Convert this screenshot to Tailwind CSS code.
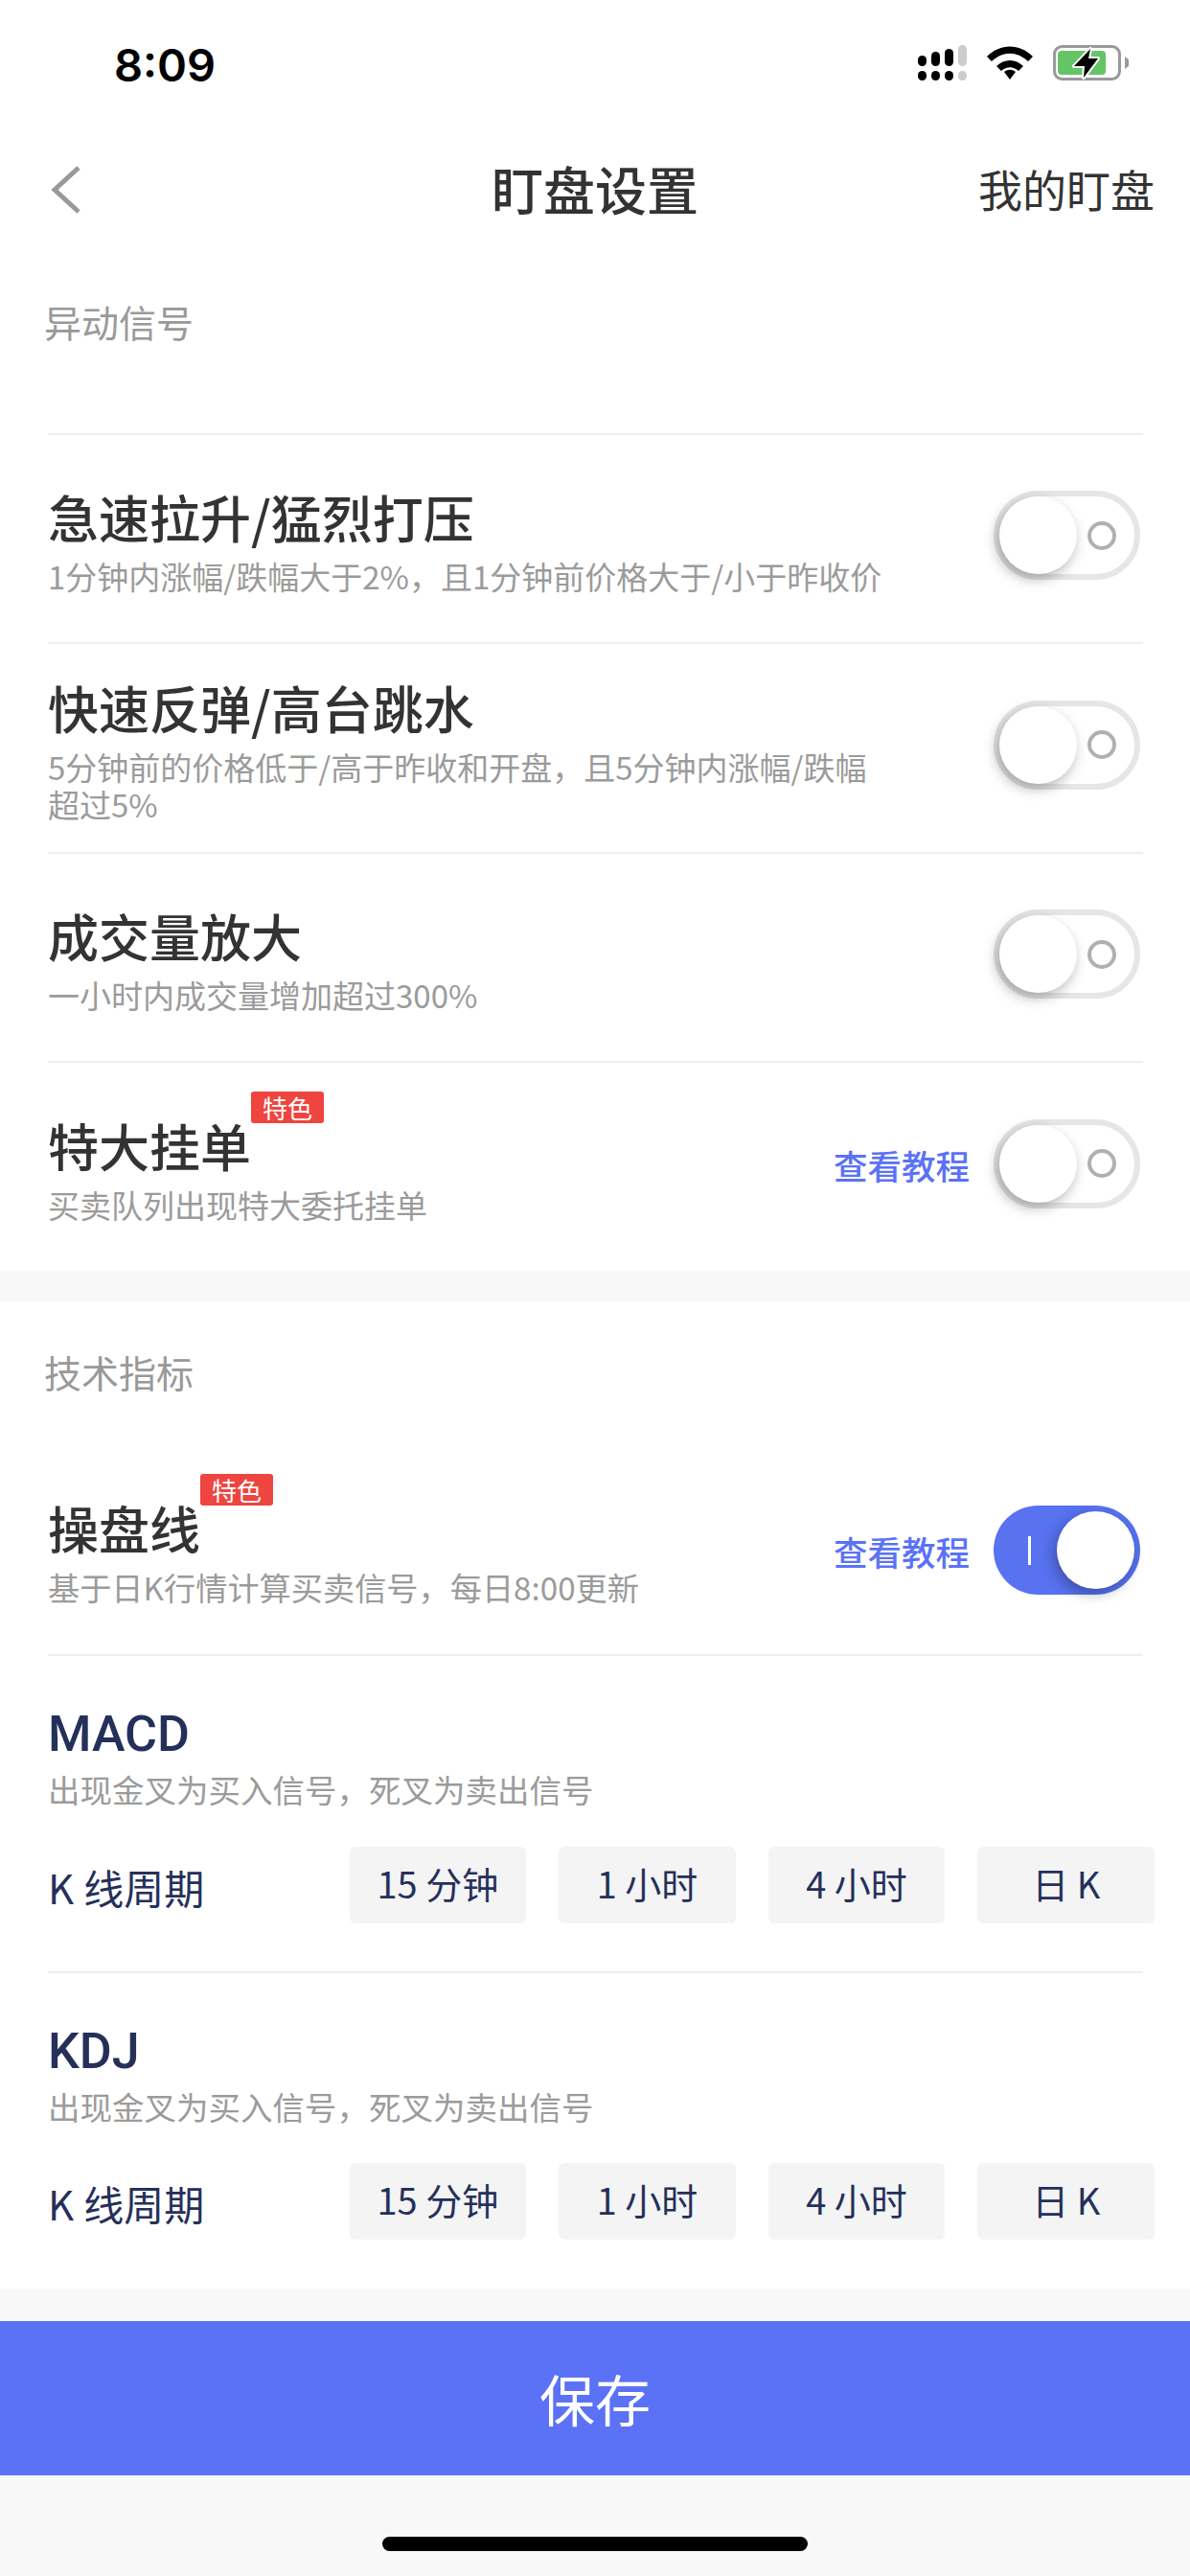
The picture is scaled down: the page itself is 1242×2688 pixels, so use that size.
<!DOCTYPE html>
<html lang="zh-CN">

<head>
  <meta charset="UTF-8" />
  <meta name="viewport" content="width=device-width, initial-scale=1.0" />
  <title>盯盘设置</title>
  <script src="https://cdn.jsdelivr.net/npm/@tailwindcss/browser@4"></script>
</head>

<body class="bg-[#f8f8f8] font-['Noto_Sans_CJK_SC',sans-serif] text-[#333333]">
  <div class="w-[1242px] h-[2688px] flex flex-col overflow-hidden">

    <!-- Status bar -->
    <div class="bg-white h-[132px] shrink-0 flex items-start justify-between pt-[42px] pl-[119px] pr-[64px]">
      <span class="font-['Inter',sans-serif] font-semibold text-[47px] leading-[52px] text-black">8:09</span>
      <div class="flex items-center gap-[21px] pt-[5px]">
        <svg width="51" height="37" viewBox="0 0 51 37">
          <rect x="0" y="11" width="9" height="11" rx="4.5" fill="#000" />
          <rect x="14" y="7" width="9" height="15" rx="4.5" fill="#000" />
          <rect x="28" y="4" width="9" height="18" rx="4.5" fill="#000" />
          <rect x="42" y="0" width="9" height="22" rx="4.5" fill="#ccc" />
          <rect x="0" y="27" width="9" height="10" rx="4.5" fill="#000" />
          <rect x="14" y="27" width="9" height="10" rx="4.5" fill="#000" />
          <rect x="28" y="27" width="9" height="10" rx="4.5" fill="#000" />
          <rect x="42" y="27" width="9" height="10" rx="4.5" fill="#ccc" />
        </svg>
        <svg width="48" height="35" viewBox="0 0 48 35">
          <path d="M0 11 C14 -3 34 -3 48 11 L43 16 C31 5 17 5 5 16 Z" fill="#000" />
          <path d="M10 21 C18 13 30 13 38 21 L33 26 C27 21 21 21 15 26 Z" fill="#000" />
          <path d="M18 27 C22 24 26 24 30 27 L24 35 Z" fill="#000" />
        </svg>
        <svg width="79" height="37" viewBox="0 0 79 37">
          <rect x="1.5" y="1.5" width="68" height="34" rx="8" fill="none" stroke="#999" stroke-width="3" />
          <rect x="5" y="6" width="50" height="25" rx="4" fill="#65c466" />
          <path d="M39 4 L22 22 H33 L32 34 L47 14 H37 Z" fill="#000" stroke="#fff" stroke-width="4" paint-order="stroke" stroke-linejoin="round" />
          <path d="M75 12 L79 15 V22 L75 25 Z" fill="#999" />
        </svg>
      </div>
    </div>

    <!-- Nav bar -->
    <div class="bg-white h-[132px] shrink-0 grid grid-cols-[1fr_auto_1fr] items-center px-[37px]">
      <svg class="ml-[15px]" width="34" height="52" viewBox="0 0 34 52" fill="none">
        <path d="M30 3 L5 26 L30 49" stroke="#999999" stroke-width="5" />
      </svg>
      <h1 class="text-[54px] leading-[66px] font-medium -mt-[3px]">盯盘设置</h1>
      <span class="justify-self-end text-[46px] leading-[60px] -mt-[5px]">我的盯盘</span>
    </div>

    <!-- 异动信号 -->
    <section class="bg-white h-[1062px] shrink-0">
      <h2 class="h-[188px] pl-[46px] pt-[47px] text-[39px] leading-[48px] text-[#999999]">异动信号</h2>

      <div class="ml-[50px] mr-[49px] h-[218px] border-t-2 border-[#eeeeee] flex items-center justify-between pt-[6px]">
        <div class="w-[900px]">
          <div class="text-[53px] leading-[60px] font-medium">急速拉升/猛烈打压</div>
          <div class="mt-[13px] text-[33px] leading-[39px] text-[#9b9b9b]">1分钟内涨幅/跌幅大于2%，且1分钟前价格大于/小于昨收价</div>
        </div>
        <div class="mr-[3px] -mt-[13px] w-[153px] h-[93px] rounded-full border-[6px] border-[#e6e6e6] flex items-center">
          <div class="w-[81px] h-[81px] rounded-full bg-white shadow-[-3px_5px_14px_rgba(0,0,0,0.3)]"></div>
          <div class="ml-[11px] w-[30px] h-[30px] rounded-full border-[4px] border-[#b0b0b0]"></div>
        </div>
      </div>

      <div class="ml-[50px] mr-[49px] h-[219px] border-t-2 border-[#eeeeee] flex items-center justify-between pt-[6px]">
        <div class="w-[900px]">
          <div class="text-[53px] leading-[60px] font-medium">快速反弹/高台跳水</div>
          <div class="mt-[13px] text-[33px] leading-[39px] text-[#9b9b9b] w-[880px]">5分钟前的价格低于/高于昨收和开盘，且5分钟内涨幅/跌幅超过5%</div>
        </div>
        <div class="mr-[3px] -mt-[13px] w-[153px] h-[93px] rounded-full border-[6px] border-[#e6e6e6] flex items-center">
          <div class="w-[81px] h-[81px] rounded-full bg-white shadow-[-3px_5px_14px_rgba(0,0,0,0.3)]"></div>
          <div class="ml-[11px] w-[30px] h-[30px] rounded-full border-[4px] border-[#b0b0b0]"></div>
        </div>
      </div>

      <div class="ml-[50px] mr-[49px] h-[218px] border-t-2 border-[#eeeeee] flex items-center justify-between pt-[6px]">
        <div class="w-[900px]">
          <div class="text-[53px] leading-[60px] font-medium">成交量放大</div>
          <div class="mt-[13px] text-[33px] leading-[39px] text-[#9b9b9b]">一小时内成交量增加超过300%</div>
        </div>
        <div class="mr-[3px] -mt-[13px] w-[153px] h-[93px] rounded-full border-[6px] border-[#e6e6e6] flex items-center">
          <div class="w-[81px] h-[81px] rounded-full bg-white shadow-[-3px_5px_14px_rgba(0,0,0,0.3)]"></div>
          <div class="ml-[11px] w-[30px] h-[30px] rounded-full border-[4px] border-[#b0b0b0]"></div>
        </div>
      </div>

      <div class="ml-[50px] mr-[49px] h-[219px] border-t-2 border-[#eeeeee] flex items-center justify-between pt-[6px]">
        <div>
          <div class="relative w-fit text-[53px] leading-[60px] font-medium">特大挂单
            <span class="absolute left-[212px] -top-[26px] w-[76px] h-[33px] rounded-[3px] bg-[#ee4540] text-white text-[26px] leading-[33px] font-normal text-center">特色</span>
          </div>
          <div class="mt-[13px] text-[33px] leading-[39px] text-[#9b9b9b]">买卖队列出现特大委托挂单</div>
        </div>
        <div class="flex items-center gap-[25px] mr-[3px] -mt-[13px]">
          <span class="mt-[3px] text-[35.5px] leading-[48px] font-medium text-[#5a72f7]">查看教程</span>
          <div class="w-[153px] h-[93px] rounded-full border-[6px] border-[#e6e6e6] flex items-center">
            <div class="w-[81px] h-[81px] rounded-full bg-white shadow-[-3px_5px_14px_rgba(0,0,0,0.3)]"></div>
            <div class="ml-[11px] w-[30px] h-[30px] rounded-full border-[4px] border-[#b0b0b0]"></div>
          </div>
        </div>
      </div>
    </section>

    <div class="h-[32px] shrink-0"></div>

    <!-- 技术指标 -->
    <section class="bg-white h-[1031px] shrink-0">
      <h2 class="h-[148px] pl-[46px] pt-[49px] text-[39px] leading-[48px] text-[#999999]">技术指标</h2>

      <div class="ml-[50px] mr-[49px] h-[220px] flex items-center justify-between pt-[7px]">
        <div>
          <div class="relative w-fit text-[53px] leading-[60px] font-medium">操盘线
            <span class="absolute left-[159px] -top-[26px] w-[76px] h-[33px] rounded-[3px] bg-[#ee4540] text-white text-[26px] leading-[33px] font-normal text-center">特色</span>
          </div>
          <div class="mt-[12px] text-[33.2px] leading-[39px] text-[#9b9b9b]">基于日K行情计算买卖信号，每日8:00更新</div>
        </div>
        <div class="flex items-center gap-[25px] mr-[3px] -mt-[4px]">
          <span class="mt-[2px] text-[35.5px] leading-[48px] font-medium text-[#5a72f7]">查看教程</span>
          <div class="w-[153px] h-[93px] rounded-full bg-[#5872f0] flex items-center pl-[36px]">
            <div class="w-[3px] h-[30px] bg-white"></div>
            <div class="ml-[27px] w-[81px] h-[81px] rounded-full bg-white shadow-[-3px_5px_14px_rgba(0,0,0,0.3)]"></div>
          </div>
        </div>
      </div>

      <div class="ml-[50px] h-[331px] border-t-2 border-[#eeeeee] mr-[49px] pt-[52px]">
        <div class="text-[52px] leading-[60px] font-medium font-['Roboto','Noto_Sans_CJK_SC',sans-serif] text-[#25305a]">MACD</div>
        <div class="mt-[7px] text-[33.5px] leading-[39px] text-[#9b9b9b]">出现金叉为买入信号，死叉为卖出信号</div>
        <div class="mt-[41px] flex items-center -mr-[12px]">
          <span class="w-[314.5px] pt-[4px] text-[42px] leading-[54px] text-[#25305a]">K<span class="ml-[10px]">线周期</span></span>
          <div class="grid grid-cols-4 gap-[34px] w-[840.5px] text-[38px] text-[#25305a] text-center">
            <div class="h-[80px] leading-[76px] rounded-[6px] bg-[#f4f4f5]">15 分钟</div>
            <div class="h-[80px] leading-[76px] rounded-[6px] bg-[#f4f4f5]">1 小时</div>
            <div class="h-[80px] leading-[76px] rounded-[6px] bg-[#f4f4f5]">4 小时</div>
            <div class="h-[80px] leading-[76px] rounded-[6px] bg-[#f4f4f5]">日 K</div>
          </div>
        </div>
      </div>

      <div class="ml-[50px] h-[332px] border-t-2 border-[#eeeeee] mr-[49px] pt-[52px]">
        <div class="text-[52px] leading-[60px] font-medium font-['Roboto','Noto_Sans_CJK_SC',sans-serif] text-[#25305a]">KDJ</div>
        <div class="mt-[7px] text-[33.5px] leading-[39px] text-[#9b9b9b]">出现金叉为买入信号，死叉为卖出信号</div>
        <div class="mt-[40px] flex items-center -mr-[12px]">
          <span class="w-[314.5px] pt-[4px] text-[42px] leading-[54px] text-[#25305a]">K<span class="ml-[10px]">线周期</span></span>
          <div class="grid grid-cols-4 gap-[34px] w-[840.5px] text-[38px] text-[#25305a] text-center">
            <div class="h-[80px] leading-[76px] rounded-[6px] bg-[#f4f4f5]">15 分钟</div>
            <div class="h-[80px] leading-[76px] rounded-[6px] bg-[#f4f4f5]">1 小时</div>
            <div class="h-[80px] leading-[76px] rounded-[6px] bg-[#f4f4f5]">4 小时</div>
            <div class="h-[80px] leading-[76px] rounded-[6px] bg-[#f4f4f5]">日 K</div>
          </div>
        </div>
      </div>
    </section>

    <!-- Save -->
    <div class="mt-[33px] h-[161px] shrink-0 bg-[#5b72f6] text-white text-[58px] flex items-center justify-center">保存</div>

    <!-- Home indicator -->
    <div class="mt-[64px] mx-auto w-[444px] h-[15px] shrink-0 rounded-full bg-black"></div>
  </div>
</body>

</html>
